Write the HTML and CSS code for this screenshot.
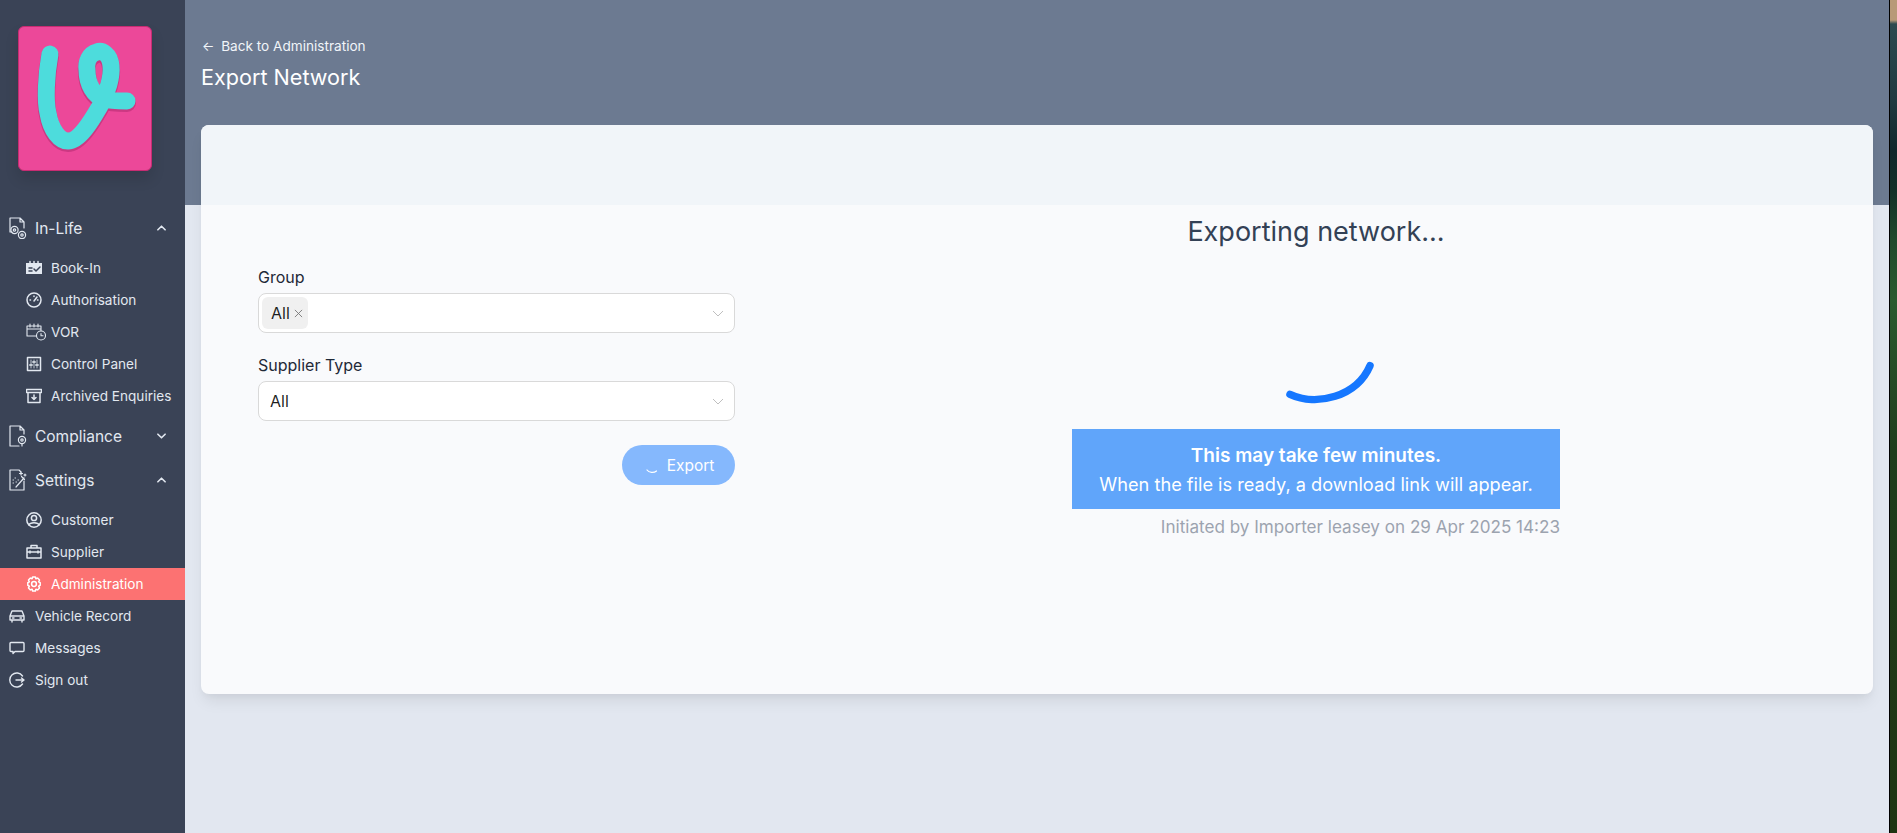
FILE: index.html
```html
<!DOCTYPE html>
<html lang="en">
<head>
<meta charset="utf-8">
<title>Export Network</title>
<link rel="stylesheet" href="styles.css">
</head>
<body>
<div class="app">
  <aside class="sidebar">
    <div class="logo">
      <svg viewBox="0 0 134 145" width="134" height="145">
        <path class="logo-shadow" d="M32 30C28 52 27 77 30 89C33 107 42 117 50 117C62 117 75 94 82 82C90 68 94 52 93 42C92 30 84 26 79 28C71 30 68 38 69 46C69 60 76 72 86 75C92 77 100 77 109 77" />
        <path class="logo-v" d="M32 28C28 50 27 75 30 87C33 105 42 115 50 115C62 115 75 92 82 80C90 66 94 50 93 40C92 28 84 24 79 26C71 28 68 36 69 44C69 58 76 70 86 73C92 75 100 75 109 75" />
      </svg>
    </div>
    <nav class="nav">
      <div class="row group-row">
        <svg class="gicon" viewBox="0 0 18 22"><path d="M1 12V1h10l4 4v6M11 1v4h4M1 12v3h2"/><circle cx="5.500" cy="13" r="3.600"/><circle cx="5.500" cy="13" r="1.200"/><circle cx="13" cy="18" r="3.600"/><circle cx="13" cy="18" r="1.200"/></svg>
        <span>In-Life</span>
        <svg class="chev" viewBox="0 0 10 6"><path d="M1 5l4-4 4 4"/></svg>
      </div>
      <ul class="sub first">
        <li class="row sub-row"><svg class="sicon" viewBox="0 0 16 16"><path class="fill" d="M0 3h16v11H0z"/><path class="cut" d="M3 8h3M3 11h3M8 9l2 2 4-4"/><path d="M4 1.500v1.500M8 1.500v1.500M12 1.500v1.500"/></svg><span>Book-In</span></li>
        <li class="row sub-row"><svg class="sicon" viewBox="0 0 16 16"><circle cx="8" cy="8" r="7"/><path d="M8 9l3-4M4 8h.5M8 4v.5M12 8h-.5"/></svg><span>Authorisation</span></li>
        <li class="row sub-row"><svg class="sicon wide" viewBox="0 0 20 18"><path d="M1 3h14v10H1zM1 6h14M4 1v3M8 1v3M12 1v3"/><circle class="bgfill" cx="15" cy="12.500" r="4.500"/><path d="M15 10.500v2.200h2"/></svg><span>VOR</span></li>
        <li class="row sub-row"><svg class="sicon" viewBox="0 0 16 16"><path d="M1.500 1.500h13v13h-13z"/><path class="thin" d="M5 4v8M8 4v8M11 4v8"/><path class="knob" d="M3.800 9h2.400M6.800 6h2.400M9.800 9h2.400"/></svg><span>Control Panel</span></li>
        <li class="row sub-row"><svg class="sicon" viewBox="0 0 16 16"><path d="M0.500 1.500h15v3h-15zM2 4.500v10h12v-10M8 7v4.500M6 9.500l2 2 2-2"/></svg><span>Archived Enquiries</span></li>
      </ul>
      <div class="row group-row">
        <svg class="gicon" viewBox="0 0 18 22"><path d="M15 9V5l-4-4H1v20h9M11 1v4h4"/><circle cx="13" cy="15" r="3.600"/><circle cx="13" cy="15" r="1.200"/><path d="M13 19v2"/></svg>
        <span>Compliance</span>
        <svg class="chev" viewBox="0 0 10 6"><path d="M1 1l4 4 4-4"/></svg>
      </div>
      <div class="row group-row">
        <svg class="gicon" viewBox="0 0 18 22"><path d="M15 12v9H1V1h9l2 2"/><path d="M7 18L15 9M12.500 7.500l3 3M12 3v3M10.500 4.500h3M16 5v2M15 6h2"/><path class="dots" d="M4 11h.5M6 9h.5M4 14h.5M7 13h.5M9 11h.5"/></svg>
        <span>Settings</span>
        <svg class="chev" viewBox="0 0 10 6"><path d="M1 5l4-4 4 4"/></svg>
      </div>
      <ul class="sub">
        <li class="row sub-row"><svg class="sicon" viewBox="0 0 16 16"><circle cx="8" cy="8" r="7.200"/><circle cx="8" cy="6" r="2.600"/><path d="M3 13c1-3 9-3 10 0"/></svg><span>Customer</span></li>
        <li class="row sub-row"><svg class="sicon" viewBox="0 0 16 16"><path d="M1 4h14v10H1zM5 4V1.500h6V4M1 8h14M4 7v2M12 7v2"/></svg><span>Supplier</span></li>
        <li class="row sub-row active"><svg class="sicon" viewBox="0 0 16 16"><path d="M6.600 1h2.800l.5 1.800 1.700-.7 1.900 2-.9 1.700 1.600.9v2.600l-1.600.9.9 1.700-1.900 2-1.700-.7-.5 1.800H6.600l-.5-1.800-1.700.7-1.900-2 .9-1.700-1.600-.9V6.700l1.600-.9-.9-1.700 1.900-2 1.700.7z"/><circle cx="8" cy="8" r="2.400"/></svg><span>Administration</span></li>
      </ul>
      <div class="row top-row"><svg class="gicon short" viewBox="0 0 16 14"><path d="M1 11V7l2-5h10l2 5v4zM1 7h14M3 11v2M13 11v2"/><path d="M3.500 9h1.500M11 9h1.500"/></svg><span>Vehicle Record</span></div>
      <div class="row top-row"><svg class="gicon short" viewBox="0 0 16 14"><path d="M2 1.500h12a1 1 0 0 1 1 1v7a1 1 0 0 1-1 1H6l-2 2v-2H2a1 1 0 0 1-1-1v-7a1 1 0 0 1 1-1z"/></svg><span>Messages</span></div>
      <div class="row top-row"><svg class="gicon short" viewBox="0 0 16 16"><path d="M13.500 4A7 7 0 1 0 13.500 12M7 8h8M12.500 6l2.500 2-2.500 2"/></svg><span>Sign out</span></div>
    </nav>
  </aside>

  <main class="main">
    <header class="head">
      <a class="back"><span class="arrow">←</span> Back to Administration</a>
      <h1 class="title">Export Network</h1>
    </header>
    <section class="card">
      <div class="card-top"></div>
      <div class="card-body">
        <form class="form">
          <label class="label">Group</label>
          <div class="select">
            <span class="tag">All <svg viewBox="0 0 10 10" width="9" height="9"><path d="M1 1l8 8M9 1l-8 8"/></svg></span>
            <svg class="caret" viewBox="0 0 12 7" width="12" height="7"><path d="M1 1l5 5 5-5"/></svg>
          </div>
          <label class="label second">Supplier Type</label>
          <div class="select plain">
            <span>All</span>
            <svg class="caret" viewBox="0 0 12 7" width="12" height="7"><path d="M1 1l5 5 5-5"/></svg>
          </div>
          <div class="actions">
            <button class="btn" type="button">
              <svg class="btn-spin" viewBox="0 0 14 14" width="14" height="14"><path d="M2 9C4 12 9 12 11.500 10"/></svg>
              Export
            </button>
          </div>
        </form>
        <div class="progress">
          <h2 class="progress-title">Exporting network...</h2>
          <svg class="spinner" viewBox="0 0 100 50" width="100" height="50"><path d="M24 34.300C50.700 46.700 90.700 36.700 104 5.700"/></svg>
          <div class="alert">
            <strong>This may take few minutes.</strong>
            <span>When the file is ready, a download link will appear.</span>
          </div>
          <p class="initiated">Initiated by Importer leasey on 29 Apr 2025 14:23</p>
        </div>
      </div>
    </section>
  </main>
  <div class="desktop"></div>
</div>
</body>
</html>
```
FILE: styles.css
```css
* { box-sizing: border-box; }
html, body { margin: 0; height: 100%; overflow: hidden; }
body { font-family: Inter, "Liberation Sans", sans-serif; color: #1f2937; }

.app { display: flex; height: 833px; width: 1897px; }

/* Sidebar */
.sidebar { width: 185px; flex: none; background: #3a4356; color: #e2e8f0; padding-top: 26px; }
.logo {
  width: 134px; height: 145px; margin-left: 18px;
  background: #ec4899; border: 1px solid #c72c72; border-radius: 6px;
  box-shadow: 0 8px 14px rgba(0,0,0,.12);
  overflow: hidden;
}
.logo svg { display: block; margin: -1px; }
.logo-v { fill: none; stroke: #4ddcdc; stroke-width: 17; stroke-linecap: round; stroke-linejoin: round; }
.logo-shadow { fill: none; stroke: rgba(130,20,80,.3); stroke-width: 18; stroke-linecap: round; }

.nav { margin-top: 35px; }
.row { display: flex; align-items: center; }
.row svg { flex: none; fill: none; stroke: currentColor; stroke-width: 1.2; stroke-linecap: round; stroke-linejoin: round; }
.group-row { height: 44px; padding-left: 9px; font-size: 15.5px; }
.gicon { width: 18px; height: 22px; margin-right: 8px; }
.gicon.short { width: 16px; height: 16px; margin: 0 10px 0 9px; stroke-width: 1.4; }
.chev { width: 9px; height: 6px; margin-left: auto; margin-right: 19px; stroke-width: 1.8 !important; }
.sub { list-style: none; margin: 2px 0 0; padding: 0; }
.sub.first { margin-bottom: 2px; }
.sub-row { height: 32px; padding-left: 26px; font-size: 13.6px; }
.sicon { width: 16px; height: 16px; margin-right: 9px; stroke-width: 1.5 !important; }
.sicon.wide { width: 20px; height: 18px; margin-right: 5px; stroke-width: 1.1 !important; }
.sicon .fill { fill: currentColor; stroke: none; }
.sicon .cut { stroke: #3a4356; }
.sicon .bgfill { fill: #3a4356; }
.sicon .thin { stroke-width: .8; }
.sicon .knob { stroke-width: 1.6; }
.gicon .dots { stroke-width: 1; }
.active { background: #fc7272; color: #fff; }
.top-row { height: 32px; font-size: 13.6px; }

/* Main */
.main {
  width: 1704px; flex: none;
  background: linear-gradient(#6c7a91 205px, #e2e7f0 205px);
  padding: 0 16px;
}
.head { height: 125px; padding-top: 36px; color: #fff; }
.back { display: block; font-size: 13.6px; line-height: 20px; color: #f1f5f9; }
.arrow { font-size: 13px; margin: 0 3px 0 1px; }
.title { margin: 5px 0 0; font-size: 21.6px; line-height: 33px; font-weight: 400; }

.card {
  height: 569px; background: #f9fafc; border-radius: 8px;
  box-shadow: 0 10px 15px -3px rgba(0,0,0,.08), 0 4px 6px -2px rgba(0,0,0,.04);
  overflow: hidden;
}
.card-top { height: 80px; background: #f1f5f9; }
.card-body { display: grid; grid-template-columns: 477px 488px; column-gap: 337px; padding-left: 57px; }

.form { padding-top: 60px; }
.label { display: block; font-size: 16px; line-height: 24px; color: #1f2937; margin-bottom: 4px; }
.label.second { margin-top: 20px; }
.select {
  height: 40px; background: #fff; border: 1px solid #d9d9d9; border-radius: 8px;
  display: flex; align-items: center; padding: 0 10px 0 3px;
  font-size: 16px; color: rgba(0,0,0,.88);
}
.select.plain { padding-left: 11px; }
.tag {
  display: inline-flex; align-items: center; gap: 4px; height: 32px; padding: 0 5px 0 9px;
  background: #f0f0f0; border-radius: 6px;
}
.tag svg { fill: none; stroke: #777; stroke-width: 1; }
.caret { margin-left: auto; fill: none; stroke: #bfbfbf; stroke-width: 1; }
.actions { display: flex; justify-content: flex-end; margin-top: 24px; }
.btn {
  width: 113px; height: 40px; border: 0; border-radius: 20px;
  background: #85b8fd; color: #fff; font: 15.5px Inter, sans-serif;
  display: flex; align-items: center; justify-content: center; gap: 8px; padding: 0 0 0 2px;
}
.btn-spin { fill: none; stroke: #fff; stroke-width: 1.2; stroke-linecap: round; margin-top: 6px; }

.progress { text-align: center; display: flex; flex-direction: column; }
.progress-title { margin: 0; font-size: 27px; line-height: 54px; font-weight: 400; color: #334155; }
.spinner { align-self: center; margin: 101px 0 19px; fill: none; stroke: #1677ff; stroke-width: 7.500; stroke-linecap: round; overflow: visible; }
.alert {
  height: 80px; padding-top: 2px; background: #60a5fa; color: #fff; font-size: 18.200px; line-height: 28px;
  display: flex; flex-direction: column; justify-content: center;
}
.alert strong { font-weight: 600; font-size: 19px; }
.initiated { margin: 6px 0 0; text-align: right; font-size: 17.100px; line-height: 24px; color: #9ca3af; }

/* Desktop wallpaper showing past the window edge */
.desktop {
  flex: 1; border-left: 1px solid #000;
  background: linear-gradient(#b89a78 0, #b89a78 20px, #2c4a50 24px, #1f3a40 100px, #10282c 150px, #123028 190px, #1f4a2c 240px, #2a5a2e 300px, #1f3d1c 450px, #1e3512 833px);
}
```
